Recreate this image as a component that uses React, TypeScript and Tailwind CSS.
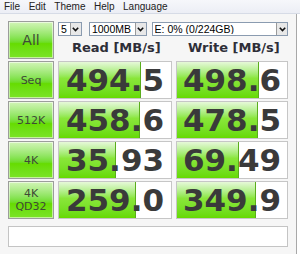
const rows = [
  { label: ['Seq'], read: '494.5', readBar: 82, write: '498.6', writeBar: 82 },
  { label: ['512K'], read: '458.6', readBar: 81, write: '478.5', writeBar: 81 },
  { label: ['4K'], read: '35.93', readBar: 57, write: '69.49', writeBar: 62 },
  { label: ['4K', 'QD32'], read: '259.0', readBar: 77, write: '349.9', writeBar: 79 },
];

function GreenButton({ lines, big }: { lines: string[]; big?: boolean }) {
  return (
    <div className="flex h-full flex-col items-center justify-center border border-[#9c9c9c] bg-linear-to-b from-[#d2f4b6] via-[#66dc00] via-60% to-[#7be424] shadow-[inset_0_0_0_1px_rgba(255,255,255,0.55)]">
      {lines.map((l) => (
        <span
          key={l}
          className={
            big
              ? "font-['DejaVu_Sans',sans-serif] text-[14px] leading-none text-[#3e4a36]"
              : "font-['DejaVu_Sans',sans-serif] text-[11px] leading-[13px] text-[#3e4a36]"
          }
        >
          {l}
        </span>
      ))}
    </div>
  );
}

function ValueCell({ value, bar }: { value: string; bar: number }) {
  return (
    <div className="relative flex h-full items-center justify-center overflow-hidden border border-[#c6c6c6] bg-white">
      {/* 進捗バー */}
      <div
        className="absolute top-0 bottom-0 left-0 border-r border-[#5aad1c] bg-linear-to-b from-[#e6f8d8] via-[#8ae63a] via-45% to-[#66da00]"
        style={{ width: bar }}
      />
      <span className="relative font-['DejaVu_Sans',sans-serif] text-[31px] font-bold leading-none text-[#3a3a3a]">
        {value}
      </span>
    </div>
  );
}

function Select({ text, width }: { text: string; width: number }) {
  return (
    <div
      className="flex h-[14px] items-center border border-[#8a9bb0] bg-white pl-[2px]"
      style={{ width }}
    >
      <span className="flex-1 truncate font-['Liberation_Sans',sans-serif] text-[10.5px] leading-none text-black">
        {text}
      </span>
      <div className="flex h-full w-[11px] items-center justify-center border-l border-[#9a9a9a] bg-[#e8e8e8]">
        <svg width="7" height="5" viewBox="0 0 7 5">
          <path d="M0.8 0.8 L3.5 3.6 L6.2 0.8" fill="none" stroke="#111" strokeWidth="1.6" />
        </svg>
      </div>
    </div>
  );
}

export default function App() {
  return (
    <div className="h-[254px] w-[300px] overflow-hidden bg-white">
      {/* メニュー */}
      <div className="flex h-[14px] items-center gap-[8.5px] border-b border-[#d6dbe6] bg-linear-to-b from-[#f6f7fb] to-[#eceef5] pl-[4px] font-['Liberation_Sans',sans-serif] text-[10px] leading-none text-[#222]">
        <span>File</span>
        <span>Edit</span>
        <span>Theme</span>
        <span>Help</span>
        <span>Language</span>
      </div>

      <div className="h-[240px] w-[297px] border-r border-[#a8a8a8] bg-[#f6f6f6] pt-[7px] pl-[8px]">
        <div className="grid grid-cols-[46px_114px_112px] grid-rows-[38px_38px_38px_38px_38px] gap-x-[4px] gap-y-[2px]">
          <GreenButton lines={['All']} big />
          <div className="col-span-2 flex flex-col">
            <div className="flex pt-[1px]">
              <Select text="5" width={24} />
              <div className="w-[7px]" />
              <Select text="1000MB" width={58} />
              <div className="w-[5px]" />
              <Select text="E: 0% (0/224GB)" width={137} />
            </div>
            <div className="mt-[3px] grid grid-cols-[114px_112px] gap-x-[4px] font-['DejaVu_Sans',sans-serif] text-[13px] font-bold leading-none text-[#2e2e38]">
              <span className="pl-[14px] pt-[2px]">Read [MB/s]</span>
              <span className="pl-[12px] pt-[2px]">Write [MB/s]</span>
            </div>
          </div>

          {rows.map((r) => (
            <div key={r.read} className="contents">
              <GreenButton lines={r.label} />
              <ValueCell value={r.read} bar={r.readBar} />
              <ValueCell value={r.write} bar={r.writeBar} />
            </div>
          ))}
        </div>

        {/* ステータス */}
        <div className="mt-[7px] h-[21px] w-[280px] border border-[#c4c4c4] bg-white" />
      </div>
    </div>
  );
}
